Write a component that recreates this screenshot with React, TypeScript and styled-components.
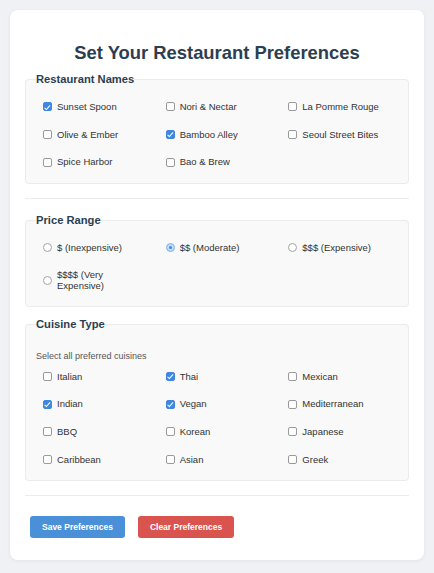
import React, { useState } from "react";
import styled, { createGlobalStyle } from "styled-components";

const GlobalStyle = createGlobalStyle`
  html, body {
    margin: 0;
    padding: 0;
    background: #f0f1f5;
  }
  body {
    font-family: "Liberation Sans", Arial, Helvetica, sans-serif;
    color: #333;
  }
`;

const Page = styled.div`
  padding: 10px;
`;

const Card = styled.form`
  background: #fff;
  border-radius: 8px;
  padding: 15px 15px 16.5px;
  box-shadow: 0 1px 4px rgba(0, 0, 0, 0.06);
`;

const Title = styled.h1`
  margin: 17px 0 10px;
  font-size: 18.4px;
  line-height: 21px;
  font-weight: 700;
  text-align: center;
  color: #2c3e50;
`;

const Group = styled.fieldset`
  margin: 0 0 11px;
  padding: 7px 10px;
  border: 1px solid #ebebeb;
  border-radius: 4px;
  background: #f9f9f9;
  min-width: 0;
`;

const Legend = styled.legend`
  padding: 0;
  font-size: 11.2px;
  line-height: 13px;
  font-weight: 700;
  color: #2c3e50;
`;

const Hint = styled.p`
  margin: 13px 0 0.5px;
  font-size: 9px;
  line-height: 11px;
  color: #555;
`;

const Options = styled.div<{ $lineHeight?: string }>`
  display: grid;
  grid-template-columns: repeat(3, 1fr);
  column-gap: 6px;
  line-height: ${(p) => p.$lineHeight ?? "11.7px"};
`;

const Option = styled.label`
  display: flex;
  align-items: center;
  gap: 5px;
  padding: 8px 7px;
  font-size: 9.5px;
  line-height: inherit;
  color: #333;
  cursor: pointer;
`;

const Check = styled.input`
  appearance: none;
  flex: none;
  position: relative;
  width: 9px;
  height: 9px;
  margin: 0;
  border: 1px solid #9a9a9a;
  border-radius: 2px;
  background: #fff;

  &:checked {
    background: #3f87e0;
    border-color: #3f87e0;
  }
  &:checked::after {
    content: "";
    position: absolute;
    left: 2.4px;
    top: 0.4px;
    width: 2px;
    height: 4.5px;
    border: solid #fff;
    border-width: 0 1.3px 1.3px 0;
    transform: rotate(42deg);
  }
`;

const Radio = styled.input`
  appearance: none;
  flex: none;
  width: 9px;
  height: 9px;
  margin: 0;
  border: 1px solid #a5a5a5;
  border-radius: 50%;
  background: #fff;

  &:checked {
    border-color: #9cc3f0;
    background: #3f87e0;
    box-shadow: inset 0 0 0 2px #c6dcf7;
  }
`;

const Divider = styled.hr`
  margin: 14px 0 15px;
  border: 0;
  border-top: 1px solid #ececec;
`;

const Actions = styled.div`
  display: flex;
  gap: 13px;
  padding: 5px;
`;

const Button = styled.button<{ $tone: "primary" | "danger" }>`
  padding: 6px 12px;
  border: 0;
  border-radius: 3px;
  font-family: inherit;
  font-size: 8.5px;
  line-height: 10px;
  font-weight: 700;
  color: #fff;
  background: ${(p) => (p.$tone === "primary" ? "#4a90d9" : "#d9534f")};
  cursor: pointer;
`;

const restaurants = [
  "Sunset Spoon",
  "Nori & Nectar",
  "La Pomme Rouge",
  "Olive & Ember",
  "Bamboo Alley",
  "Seoul Street Bites",
  "Spice Harbor",
  "Bao & Brew",
];

const prices = [
  "$ (Inexpensive)",
  "$$ (Moderate)",
  "$$$ (Expensive)",
  "$$$$ (Very Expensive)",
];

const cuisines = [
  "Italian",
  "Thai",
  "Mexican",
  "Indian",
  "Vegan",
  "Mediterranean",
  "BBQ",
  "Korean",
  "Japanese",
  "Caribbean",
  "Asian",
  "Greek",
];

export default function App() {
  const [picked, setPicked] = useState<string[]>(["Sunset Spoon", "Bamboo Alley"]);
  const [price, setPrice] = useState("$$ (Moderate)");
  const [food, setFood] = useState<string[]>(["Thai", "Indian", "Vegan"]);

  const toggle = (list: string[], set: (v: string[]) => void, name: string) =>
    set(list.includes(name) ? list.filter((n) => n !== name) : [...list, name]);

  return (
    <>
      <GlobalStyle />
      <Page>
        <Card onSubmit={(e) => e.preventDefault()}>
          <Title>Set Your Restaurant Preferences</Title>

          <Group>
            <Legend>Restaurant Names</Legend>
            <Options>
              {restaurants.map((name) => (
                <Option key={name}>
                  <Check
                    type="checkbox"
                    checked={picked.includes(name)}
                    onChange={() => toggle(picked, setPicked, name)}
                  />
                  {name}
                </Option>
              ))}
            </Options>
          </Group>

          <Divider />

          <Group>
            <Legend>Price Range</Legend>
            <Options $lineHeight="11px">
              {prices.map((p) => (
                <Option key={p}>
                  <Radio
                    type="radio"
                    name="price"
                    checked={price === p}
                    onChange={() => setPrice(p)}
                  />
                  {p}
                </Option>
              ))}
            </Options>
          </Group>

          <Group>
            <Legend>Cuisine Type</Legend>
            <Hint>Select all preferred cuisines</Hint>
            <Options>
              {cuisines.map((c) => (
                <Option key={c}>
                  <Check
                    type="checkbox"
                    checked={food.includes(c)}
                    onChange={() => toggle(food, setFood, c)}
                  />
                  {c}
                </Option>
              ))}
            </Options>
          </Group>

          <Divider />

          <Actions>
            <Button type="submit" $tone="primary">Save Preferences</Button>
            <Button
              type="button"
              $tone="danger"
              onClick={() => {
                setPicked([]);
                setPrice("");
                setFood([]);
              }}
            >
              Clear Preferences
            </Button>
          </Actions>
        </Card>
      </Page>
    </>
  );
}
